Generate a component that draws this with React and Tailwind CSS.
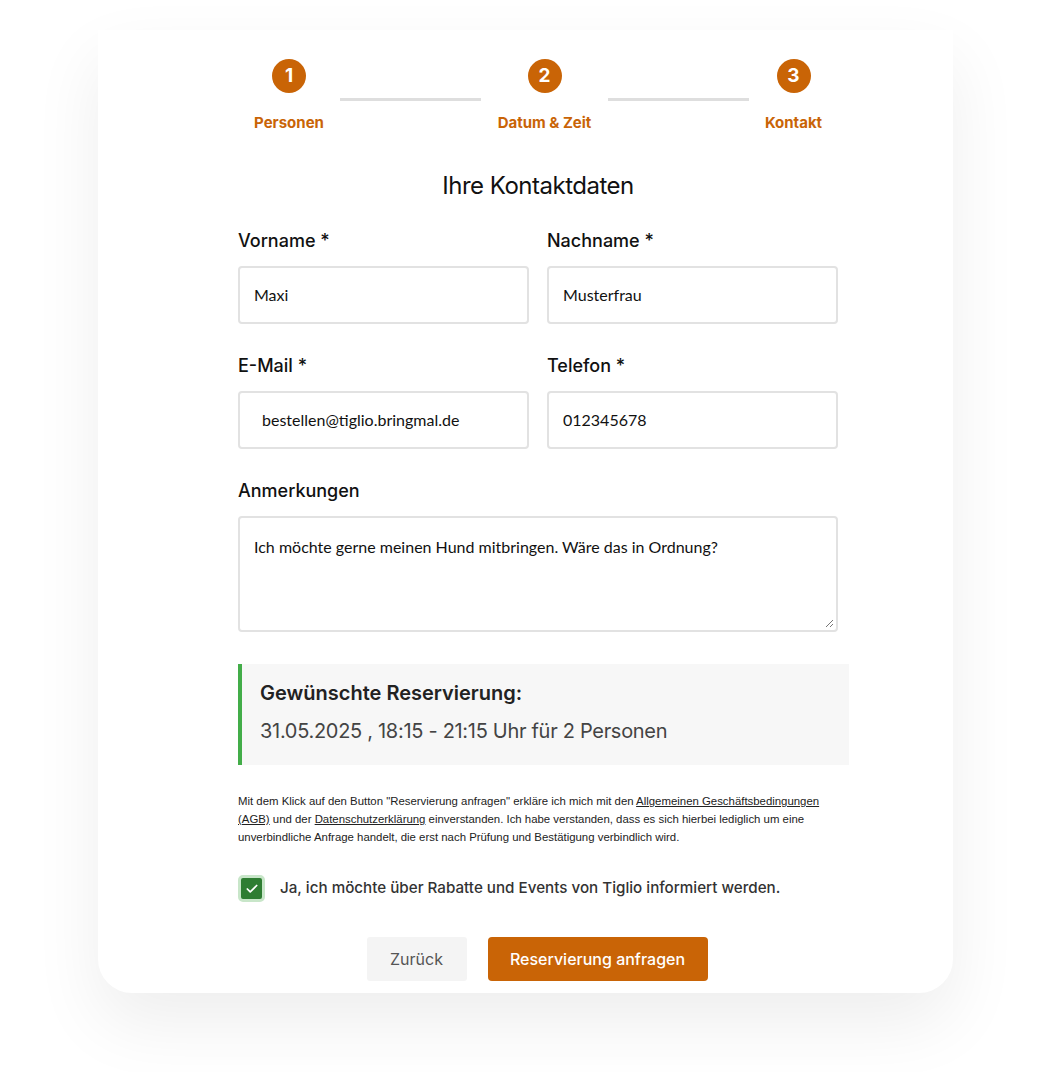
import React from "react";
import { Check } from "lucide-react";

const ORANGE = "text-[#c96406]";

function Step({ n, label, width }) {
  return (
    <div className={`flex shrink-0 flex-col items-center ${width}`}>
      <div className="grid h-[34px] w-[34px] place-items-center rounded-full bg-[#c96406] text-[19px] font-bold text-white">
        {n}
      </div>
      <div className={`mt-[21px] text-[15px] font-bold leading-[18px] ${ORANGE}`}>{label}</div>
    </div>
  );
}

function Line() {
  return <div className="mt-[39px] h-[3px] w-[141px] shrink-0 bg-[#dedede]" />;
}

function Field({ label, value, extra = "" }) {
  return (
    <div className="flex flex-col">
      <label className="text-[18px] font-medium leading-[22px] text-[#111]">{label}</label>
      <div
        className={`mt-[14px] flex h-[58px] items-center rounded-[4px] border-2 border-[#e2e2e2] px-[14px] text-[16px] text-[#111] ${extra}`}
        style={{ fontFamily: "Lato, 'Noto Sans', sans-serif" }}
      >
        {value}
      </div>
    </div>
  );
}

export default function App() {
  return (
    <div
      className="min-h-[1072px] w-[1050px] overflow-hidden bg-white pb-[80px]"
      style={{ fontFamily: "Inter, 'Liberation Sans', sans-serif" }}
    >
      <div className="ml-[98px] mt-[30px] w-[855px] rounded-b-[34px] bg-white pb-[12px] shadow-[0_30px_70px_rgba(0,0,0,0.07)]">
        <div className="ml-[140px] w-[600px] pt-[29px]">
          {/* ── Stepper ── */}
          <div className="flex">
            <Step n="1" label="Personen" width="w-[102px]" />
            <Line />
            <Step n="2" label="Datum & Zeit" width="w-[127px]" />
            <Line />
            <Step n="3" label="Kontakt" width="w-[89px]" />
          </div>

          <h1 className="mt-[39px] text-center text-[24px] font-normal leading-[30px] tracking-[-0.5px] text-[#111]">
            Ihre Kontaktdaten
          </h1>

          {/* ── Felder ── */}
          <div className="mt-[29px] grid grid-cols-2 gap-x-[18px] gap-y-[31px]">
            <Field label="Vorname *" value="Maxi" />
            <Field label="Nachname *" value="Musterfrau" />
            <Field label="E-Mail *" value="bestellen@tiglio.bringmal.de" extra="pl-[22px]" />
            <Field label="Telefon *" value="012345678" />
          </div>

          <div className="mt-[31px] flex flex-col">
            <label className="text-[18px] font-medium leading-[22px] text-[#111]">Anmerkungen</label>
            <div
              className="relative mt-[14px] h-[116px] rounded-[4px] border-2 border-[#e2e2e2] px-[14px] pt-[17px] text-[16px] text-[#111]"
              style={{ fontFamily: "Lato, 'Noto Sans', sans-serif" }}
            >
              Ich möchte gerne meinen Hund mitbringen. Wäre das in Ordnung?
              <svg className="absolute bottom-[2px] right-[2px]" width="9" height="9" viewBox="0 0 9 9">
                <path d="M8 1L1 8M8 5L5 8" stroke="#777" strokeWidth="1" />
              </svg>
            </div>
          </div>

          {/* ── Reservierung ── */}
          <div className="mt-[32px] w-[611px] border-l-4 border-[#43ad49] bg-[#f7f7f7] px-[18px] pb-[21px] pt-[16px]">
            <div className="text-[20px] font-semibold leading-[26px] text-[#222]">Gewünschte Reservierung:</div>
            <div className="mt-[12px] text-[20px] leading-[26px] tracking-[-0.3px] text-[#444]">
              31.05.2025 , 18:15 - 21:15 Uhr für 2 Personen
            </div>
          </div>

          <p
            className="mt-[27px] text-[11.4px] leading-[18px] text-[#222]"
            style={{ fontFamily: "'Liberation Sans', Arial, sans-serif" }}
          >
            Mit dem Klick auf den Button "Reservierung anfragen" erkläre ich mich mit den{" "}
            <span className="underline">Allgemeinen Geschäftsbedingungen</span>{" "}
            <span className="underline">(AGB)</span> und der{" "}
            <span className="underline">Datenschutzerklärung</span> einverstanden. Ich habe verstanden, dass es sich
            hierbei lediglich um eine unverbindliche Anfrage handelt, die erst nach Prüfung und Bestätigung verbindlich
            wird.
          </p>

          <div className="mt-[29px] flex items-center">
            <div className="grid h-[27px] w-[27px] place-items-center rounded-[5px] border-[3px] border-[#c8e6c9] bg-[#2e7d32]">
              <Check size={14} strokeWidth={3} className="text-white" />
            </div>
            <span className="ml-[15px] text-[15.2px] font-medium text-[#333]">
              Ja, ich möchte über Rabatte und Events von Tiglio informiert werden.
            </span>
          </div>

          {/* ── Buttons ── */}
          <div className="mt-[35px] flex justify-center gap-[21px] pr-[2px]">
            <button className="h-[44px] w-[100px] rounded-[3px] bg-[#f4f4f4] text-[16px] text-[#555]">Zurück</button>
            <button className="h-[44px] w-[220px] rounded-[4px] bg-[#c96406] text-[16px] font-medium text-white">
              Reservierung anfragen
            </button>
          </div>
        </div>
      </div>
    </div>
  );
}
